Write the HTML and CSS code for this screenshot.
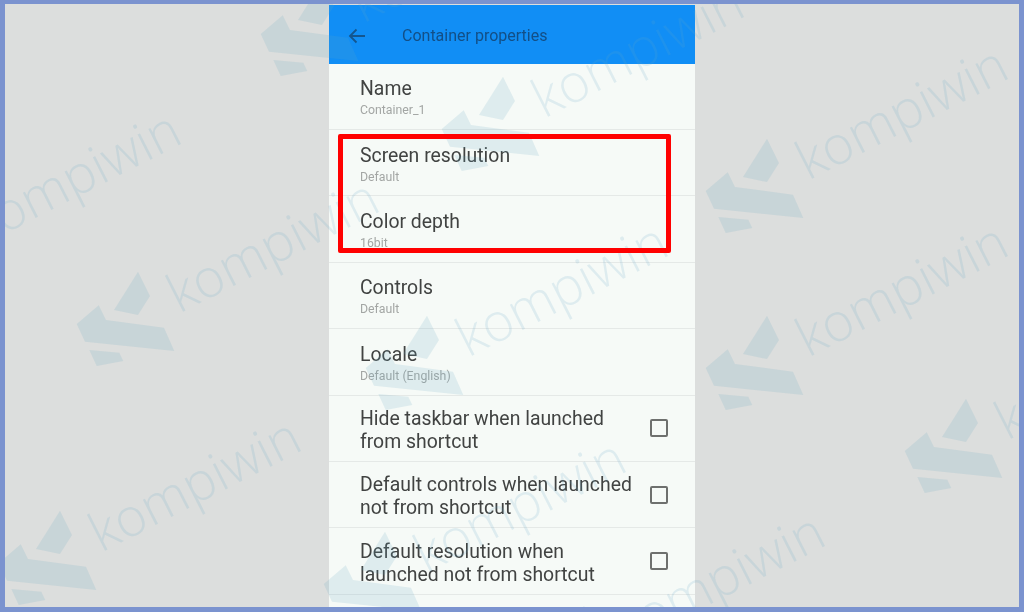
FILE: index.html
```html
<!DOCTYPE html>
<html>
<head>
    <title>Container properties</title>
    <meta name="viewport" content="width=device-width, initial-scale=1.0">
    <link rel="stylesheet" href="styles.css">
</head>
<body>
    <svg class="defs" width="0" height="0">
        <symbol id="logo" viewBox="0 0 99 96">
            <polygon points="62,0.7 74,25 62,44 38,39"></polygon>
            <polygon points="0.7,53 22.7,34.3 30,49 88,56.7 98.3,80 9,70.7"></polygon>
            <polygon points="13.3,79 43.3,81.7 47.3,90 20.7,95"></polygon>
        </symbol>
    </svg>

    <div class="page">
        <div class="phone">
            <div class="appbar">
                <svg class="back" viewBox="0 0 18 16" width="18" height="16">
                    <path d="M17 8H2M8.5 1.5 2 8l6.5 6.5"></path>
                </svg>
                <span class="appbar-title">Container properties</span>
            </div>

            <div class="row">
                <div class="row-text">
                    <div class="row-title">Name</div>
                    <div class="row-sub">Container_1</div>
                </div>
            </div>
            <div class="row">
                <div class="row-text">
                    <div class="row-title">Screen resolution</div>
                    <div class="row-sub">Default</div>
                </div>
            </div>
            <div class="row">
                <div class="row-text">
                    <div class="row-title">Color depth</div>
                    <div class="row-sub">16bit</div>
                </div>
            </div>
            <div class="row">
                <div class="row-text">
                    <div class="row-title">Controls</div>
                    <div class="row-sub">Default</div>
                </div>
            </div>
            <div class="row">
                <div class="row-text">
                    <div class="row-title">Locale</div>
                    <div class="row-sub">Default (English)</div>
                </div>
            </div>
            <div class="row">
                <div class="row-text">
                    <div class="row-title">Hide taskbar when launched<br>from shortcut</div>
                </div>
                <span class="checkbox"></span>
            </div>
            <div class="row">
                <div class="row-text">
                    <div class="row-title">Default controls when launched<br>not from shortcut</div>
                </div>
                <span class="checkbox"></span>
            </div>
            <div class="row">
                <div class="row-text">
                    <div class="row-title">Default resolution when<br>launched not from shortcut</div>
                </div>
                <span class="checkbox"></span>
            </div>
        </div>

        <!-- watermark sits on top of everything -->
        <div class="marks">
            <div class="mark mark-a"><svg><use href="#logo"></use></svg><span>kompiwin</span></div>
            <div class="mark mark-b"><svg><use href="#logo"></use></svg><span>kompiwin</span></div>
            <div class="mark mark-c"><svg><use href="#logo"></use></svg><span>kompiwin</span></div>
            <div class="mark mark-d"><svg><use href="#logo"></use></svg><span>kompiwin</span></div>
            <div class="mark mark-e"><svg><use href="#logo"></use></svg><span>kompiwin</span></div>
            <div class="mark mark-f"><svg><use href="#logo"></use></svg><span>kompiwin</span></div>
            <div class="mark mark-g"><svg><use href="#logo"></use></svg><span>kompiwin</span></div>
            <div class="mark mark-h"><svg><use href="#logo"></use></svg><span>kompiwin</span></div>
            <div class="mark mark-i"><svg><use href="#logo"></use></svg><span>kompiwin</span></div>
            <div class="mark mark-j"><svg><use href="#logo"></use></svg><span>kompiwin</span></div>
            <div class="mark mark-k"><svg><use href="#logo"></use></svg><span>kompiwin</span></div>
        </div>

        <div class="highlight"></div>
    </div>
</body>
</html>
```

FILE: styles.css
```css
body {
    margin: 0;
    font-family: Roboto, "Liberation Sans", sans-serif;
    overflow: hidden;
}
.defs {
    position: absolute;
}
.page {
    position: relative;
    box-sizing: border-box;
    width: 1024px;
    height: 612px;
    padding-top: 1px;
    display: flex;
    justify-content: center;
    overflow: hidden;
    background-color: #dcdedd;
    border-style: solid;
    border-color: #7b93cf;
    border-width: 4px 5px 5px 5px;
}
.phone {
    width: 366px;
    flex-shrink: 0;
    background-color: #f6faf7;
    filter: blur(0.4px);
}
.appbar {
    box-sizing: border-box;
    height: 58.6px;
    display: flex;
    align-items: center;
    padding-left: 19px;
    padding-top: 3px;
    background-color: #118ef5;
}
.back {
    margin-right: 36px;
    fill: none;
    stroke: #14568f;
    stroke-width: 1.8;
}
.appbar-title {
    font-size: 16px;
    color: #134f86;
}
.row {
    box-sizing: border-box;
    height: 66.4px;
    display: flex;
    align-items: center;
    justify-content: space-between;
    padding: 3px 27px 0 31px;
    border-bottom: 1px solid #e5e9e7;
}
.row-title {
    font-size: 19.4px;
    line-height: 23px;
    color: #414342;
}
.row-sub {
    margin-top: 3px;
    font-size: 12.3px;
    line-height: 15px;
    color: #a3a6a4;
}
.checkbox {
    box-sizing: border-box;
    width: 18px;
    height: 18px;
    margin-top: -3px;
    border: 2px solid #6e706e;
    border-radius: 2px;
}
.highlight {
    position: absolute;
    left: 333px;
    top: 130px;
    box-sizing: border-box;
    width: 333px;
    height: 119px;
    border: 5px solid #ff0000;
    border-radius: 2px;
}
.marks {
    position: absolute;
    top: 0;
    right: 0;
    bottom: 0;
    left: 0;
    overflow: hidden;
    pointer-events: none;
}
.mark {
    position: absolute;
    width: 99px;
    height: 96px;
    color: rgba(100, 170, 200, 0.16);
}
.mark svg {
    display: block;
    width: 99px;
    height: 96px;
    fill: rgba(100, 165, 195, 0.16);
}
.mark span {
    position: absolute;
    left: 94px;
    top: 25px;
    font-family: "Open Sans", sans-serif;
    font-size: 53px;
    font-weight: 300;
    line-height: 0;
    white-space: nowrap;
    transform-origin: 0 0;
    transform: rotate(-27deg);
}
.mark-a { left: 255px; top: -23px; }
.mark-b { left: 436px; top: 72px; }
.mark-c { left: 700px; top: 134px; }
.mark-d { left: -127px; top: 199px; }
.mark-e { left: 71px; top: 267px; }
.mark-f { left: 360px; top: 311px; }
.mark-g { left: 700px; top: 311px; }
.mark-h { left: -7px; top: 506px; }
.mark-i { left: 318px; top: 527px; }
.mark-j { left: 899px; top: 394px; }
.mark-k { left: 517px; top: 601px; }
```
